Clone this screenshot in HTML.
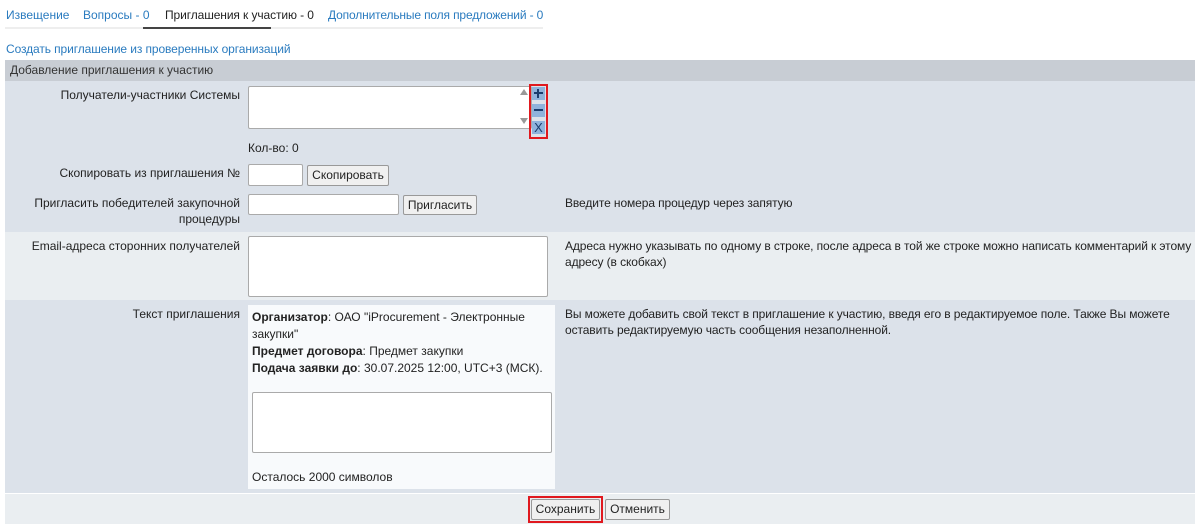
<!DOCTYPE html>
<html><head><meta charset="utf-8"><style>
*{box-sizing:border-box}
body{margin:0;width:1200px;height:531px;background:#fff;font-family:"Liberation Sans",Arial,sans-serif;font-size:12px;color:#222;position:relative;overflow:hidden}
.a{position:absolute}
.lnk{color:#2a7bbf}
.lbl{position:absolute;right:960px;text-align:right;line-height:16px}
.inp{position:absolute;background:#fff;border:1px solid #aaa;border-radius:2px}
.btn{position:absolute;background:#f0f0f0;border:1px solid #999;border-radius:2px;text-align:center;line-height:19px;font-size:12px}
.hint{position:absolute;left:565px;line-height:16px;width:630px;letter-spacing:-0.1px}
</style></head><body>
<div class="a lnk" style="left:6px;top:8px">Извещение</div>
<div class="a lnk" style="left:83px;top:8px">Вопросы - 0</div>
<div class="a" style="left:165px;top:8px;color:#222;letter-spacing:-0.1px">Приглашения к участию - 0</div>
<div class="a lnk" style="left:328px;top:8px;letter-spacing:-0.15px">Дополнительные поля предложений - 0</div>
<div class="a" style="left:5px;top:27px;width:538px;height:2px;background:#eee"></div>
<div class="a" style="left:143px;top:27px;width:128px;height:2px;background:#444"></div>
<div class="a lnk" style="left:6px;top:42px;letter-spacing:-0.1px">Создать приглашение из проверенных организаций</div>

<div class="a" style="left:5px;top:60px;width:1190px;height:21px;background:#c8cdd4"></div>
<div class="a" style="left:10px;top:63px;color:#333">Добавление приглашения к участию</div>
<div class="a" style="left:5px;top:81px;width:1190px;height:151px;background:#dce2ea"></div>
<div class="a" style="left:5px;top:232px;width:1190px;height:68px;background:#eaeef1"></div>
<div class="a" style="left:5px;top:300px;width:1190px;height:193px;background:#dce2ea"></div>
<div class="a" style="left:5px;top:494px;width:1190px;height:30px;background:#eaeef1"></div>

<div class="lbl" style="top:87px">Получатели-участники Системы</div>
<div class="inp" style="left:248px;top:86px;width:284px;height:43px"></div>
<div class="a" style="left:520px;top:89px;width:0;height:0;border:4px solid transparent;border-bottom:6px solid #999;border-top:0"></div>
<div class="a" style="left:520px;top:118px;width:0;height:0;border:4px solid transparent;border-top:6px solid #999;border-bottom:0"></div>
<div class="a" style="left:529px;top:84px;width:19px;height:55px;border:2px solid #e0191f"></div>
<div class="a" style="left:532px;top:87px;width:13px;height:13px;background:#8fb3dc"><div class="a" style="left:2px;top:5px;width:9px;height:2px;background:#1a3d6e"></div><div class="a" style="left:5px;top:2px;width:2px;height:9px;background:#1a3d6e"></div></div>
<div class="a" style="left:532px;top:104px;width:13px;height:13px;background:#8fb3dc"><div style="margin:5px 2px;height:2px;background:#1a3d6e"></div></div>
<div class="a" style="left:532px;top:121px;width:13px;height:13px;background:#8fb3dc;color:#1a3d6e;font-size:13px;line-height:13px;text-align:center">X</div>
<div class="a" style="left:248px;top:141px">Кол-во: 0</div>

<div class="lbl" style="top:165px">Скопировать из приглашения №</div>
<div class="inp" style="left:248px;top:164px;width:55px;height:22px"></div>
<div class="btn" style="left:307px;top:165px;width:82px;height:21px">Скопировать</div>

<div class="lbl" style="top:195px">Пригласить победителей закупочной<br>процедуры</div>
<div class="inp" style="left:248px;top:194px;width:151px;height:21px"></div>
<div class="btn" style="left:403px;top:195px;width:74px;height:20px">Пригласить</div>
<div class="hint" style="top:195px">Введите номера процедур через запятую</div>

<div class="lbl" style="top:238px">Email-адреса сторонних получателей</div>
<div class="inp" style="left:248px;top:236px;width:300px;height:61px"></div>
<div class="hint" style="top:238px">Адреса нужно указывать по одному в строке, после адреса в той же строке можно написать комментарий к этому адресу (в скобках)</div>

<div class="lbl" style="top:306px">Текст приглашения</div>
<div class="a" style="left:248px;top:305px;width:307px;height:184px;background:#f8fafc"></div>
<div class="a" style="left:252px;top:309px;line-height:17px;width:300px;white-space:nowrap"><b>Организатор</b>: ОАО "iProcurement - Электронные<br>закупки"<br><b>Предмет договора</b>: Предмет закупки<br><b>Подача заявки до</b>: 30.07.2025 12:00, UTC+3 (МСК).</div>
<div class="inp" style="left:252px;top:392px;width:300px;height:61px"></div>
<div class="a" style="left:252px;top:470px">Осталось 2000 символов</div>
<div class="hint" style="top:306px">Вы можете добавить свой текст в приглашение к участию, введя его в редактируемое поле. Также Вы можете оставить редактируемую часть сообщения незаполненной.</div>

<div class="a" style="left:528px;top:496px;width:75px;height:27px;border:2px solid #e0191f"></div>
<div class="btn" style="left:531px;top:499px;width:69px;height:21px">Сохранить</div>
<div class="btn" style="left:605px;top:499px;width:65px;height:21px">Отменить</div>
</body></html>
